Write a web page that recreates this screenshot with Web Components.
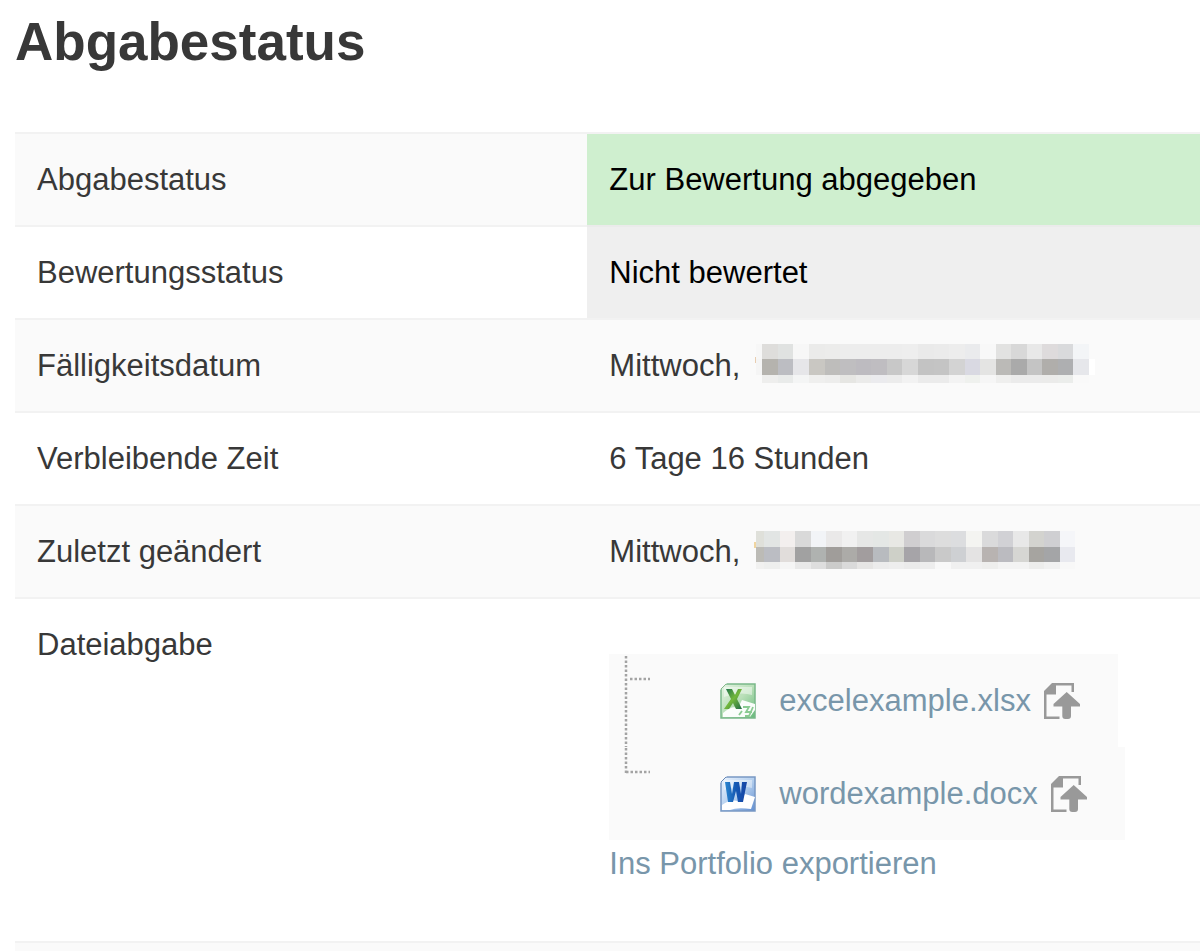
<!DOCTYPE html>
<html lang="de">
<head>
<meta charset="utf-8">
<title>Abgabestatus</title>
<style>
  body { margin: 0; background: #fff; color: #383838; font: 31px/43px "Liberation Sans", Arial, sans-serif; }
</style>
</head>
<body>
<submission-status></submission-status>

<template id="status-template">
  <style>
    :host { display: block; padding: 16px 0 0 15px; }
    h1 { margin: 0 0 64px; font-size: 53px; line-height: 52px; font-weight: 700; }
    table { width: 100%; border-collapse: separate; border-spacing: 0; table-layout: fixed; }
    .label-column { width: 48.3%; }
    th, td { box-sizing: border-box; padding: 24px 22px; border-top: 2px solid #f2f2f2; text-align: left; vertical-align: top; font-weight: 400; }
    tr:nth-child(odd) > * { background: #fafafa; }
    tr > .submitted, tr > .ungraded { background-clip: padding-box; color: #000; }
    tr > .submitted { background-color: #cfefcf; }
    tr > .ungraded { background-color: #efefef; border-top-color: #ebebeb; }
    .files { padding: 24px 22px 56px; }
    .export { display: block; margin-top: 2px; color: #7896aa; text-decoration: none; }
    file-tree { margin-top: 31px; }
    .next > td { padding: 4px 22px; }
  </style>
  <h1>Abgabestatus</h1>
  <table>
    <colgroup><col class="label-column"><col></colgroup>
    <tbody>
      <tr><th scope="row">Abgabestatus</th><td class="submitted">Zur Bewertung abgegeben</td></tr>
      <tr><th scope="row">Bewertungsstatus</th><td class="ungraded">Nicht bewertet</td></tr>
      <tr><th scope="row">Fälligkeitsdatum</th><td><masked-date kind="due">Mittwoch,</masked-date></td></tr>
      <tr><th scope="row">Verbleibende Zeit</th><td>6 Tage 16 Stunden</td></tr>
      <tr><th scope="row">Zuletzt geändert</th><td><masked-date kind="modified">Mittwoch,</masked-date></td></tr>
      <tr><th scope="row">Dateiabgabe</th>
        <td class="files">
          <file-tree>
            <file-entry kind="excel">excelexample.xlsx</file-entry>
            <file-entry kind="word">wordexample.docx</file-entry>
          </file-tree>
          <a class="export" href="#portfolio">Ins Portfolio exportieren</a>
        </td></tr>
      <tr class="next"><td colspan="2"></td></tr>
    </tbody>
  </table>
</template>

<template id="date-template">
  <style>
    :host { display: flex; align-items: flex-start; gap: 14px; height: 43px; }
    svg { display: block; flex: none; }
  </style>
  <span><slot></slot></span>
  <svg width="342" height="40" viewBox="0 0 342 40" shape-rendering="crispEdges" aria-hidden="true"></svg>
</template>

<template id="tree-template">
  <style>
    :host { display: flex; flex-direction: column; align-items: flex-start; }
  </style>
  <slot></slot>
</template>

<template id="file-template">
  <style>
    :host { display: flex; align-items: center; height: 93px; padding-right: 38px; background: #fafafa; }
    svg { display: block; flex: none; }
    .branch { margin-right: 70px; }
    .type { margin-right: 23px; }
    a { color: #7896aa; text-decoration: none; }
    .send { margin-left: 13px; }
  </style>
  <svg class="branch" width="41" height="93" viewBox="0 0 41 93" fill="none" stroke="#a3a3a3" stroke-width="2.5" stroke-dasharray="2.5 2" aria-hidden="true"><path></path></svg>
  <svg class="type" width="36" height="36" viewBox="0 0 36 36" aria-hidden="true"></svg>
  <a href="#file"><slot></slot></a>
  <a class="send" href="#send" aria-label="Exportieren">
    <svg width="36" height="36" viewBox="0 0 36 36" aria-hidden="true">
      <path d="M8 0H30V9H27.500V2.500H12V11.500H2.500V33.500H15.500V36H0V8Z" fill="#999"/>
      <path d="M22.700 9 36 21V23.500H27V33Q27 36 24 36H21.300Q18.300 36 18.300 33V23.500H9.500V21Z" fill="#999"/>
    </svg>
  </a>
</template>

<script>
  const stamp = (host, id) => {
    const root = host.attachShadow({ mode: 'open' });
    root.append(document.getElementById(id).content.cloneNode(true));
    return root;
  };

  /* Mosaic tones, listed by row from left to right. */
  const mosaics = {
    due: {
      edges: [2, 8, 24, 39, 55, 71, 86, 102, 117, 133, 148, 164, 180, 195, 211, 226, 242, 257, 273, 288, 304, 319, 335, 341],
      rows: [0, 15, 31, 39],
      tones: [
        'f7f7f7 dedddb e0e2e1 f7f7f7 ebebea ececeb ededed ededed ededed ededed eeeeee eaeaea ebebeb ededed eaebed f8f8f8 e2e2e1 d8d8d8 e8e8e8 dedbdc d9dadc f3f5f7',
        'f5f5f5 b5b3ae bcbdc2 e6e6e9 c9c7c2 bebdbb bfbec0 bdbbc0 bfbdc1 c8c8c8 d7d7d7 c3c3c3 c4c4c4 d3d3d3 d9d9e2 e4e4e3 bbbab7 aaaaaa c4c4c4 b0aeab aeafb1 e6e7eb ffffff',
        'fafafa eeeeed e9ebea f4f5f5 efefee ededec e6e6e3 ebebea ebebee ececec f2f2f2 ebebeb ebebeb f3f3f3 eff1ee f6f6f6 efefee ebebeb ebebeb ebebea ebedeb f9f9f9'
      ],
      mark: [1, 13, 'e8cdb0']
    },
    modified: {
      edges: [2, 10, 26, 41, 57, 72, 88, 103, 119, 135, 150, 166, 181, 197, 212, 228, 244, 259, 275, 290, 306, 321],
      rows: [1, 17, 32, 39],
      tones: [
        'dfe0da e2e5e4 f3efee d9d9d9 f2f4f7 eae9e9 f1f1f1 e6e7e6 e4e7e5 e8e8e4 d0ced0 dadadb dddddd dcdddf f4f4f1 dadadb d1d1d5 e8e8e8 d3d3cf cfcfd2 f5f6f9',
        'bcbbb6 bbbdc3 e1dddb a1a1a1 afb2b0 a09d9a acaba8 a29d9e b8bbbf ced0c8 a6a4a8 b8b8ba c9c9c9 ced0d3 e4e3e3 b8b3b1 bbbbc0 d6d6d3 a6a4a0 a4a5a7 e8e9ef',
        'f1f1f0 eeefee f5f5f5 e9e9e9 dedede cbcbca dadada e6e5e4 ececec eeeeee ebebeb ededed f8f8f8 f0f0f0 f0f0f0 eeeeed f3f3f3 f3f3f3 ededec f1f1f1 f8f8f8'
      ],
      mark: [0, 12, 'f0d5a0']
    }
  };

  customElements.define('masked-date', class extends HTMLElement {
    connectedCallback() {
      if (this.shadowRoot) return;
      const m = mosaics[this.getAttribute('kind')];
      let out = `<rect x="${m.mark[0]}" y="${m.mark[1]}" width="2" height="6" fill="#${m.mark[2]}"/>`;
      m.tones.forEach((line, r) => line.split(' ').forEach((tone, c) => {
        out += `<rect x="${m.edges[c]}" y="${m.rows[r]}" width="${m.edges[c + 1] - m.edges[c]}" height="${m.rows[r + 1] - m.rows[r]}" fill="#${tone}"/>`;
      }));
      stamp(this, 'date-template').querySelector('svg').innerHTML = out;
    }
  });

  const branches = {
    excel: 'M17 2V93M21 25H41',
    word: 'M17 1V26M17 25H41'
  };
  const icons = {
    excel: `
      <defs><linearGradient id="g" x2="1" y2="1"><stop stop-color="#e5f4e4"/><stop offset=".5" stop-color="#b9dfb8"/><stop offset="1" stop-color="#65b979"/></linearGradient>
      <linearGradient id="x" x2="1" y2="1"><stop stop-color="#176b4d"/><stop offset=".5" stop-color="#73b83c"/><stop offset="1" stop-color="#236b48"/></linearGradient></defs>
      <path d="M5 1H35V35H1V5Z" fill="url(#g)" stroke="#79b889" stroke-width="1.500"/>
      <path d="M4 4H32V12Q20 8 4 14Z" fill="#fff" opacity=".45"/>
      <path d="M3 34V30Q12 22 18 25L22 17 35 21V27L30 34Z" fill="#fff" opacity=".95"/>
      <path d="M6 6H12L15 12 18 6H22L17 16 22 26H16L13 20 9 26H4L11 16Z" fill="url(#x)"/>
      <path d="M23 24H29L26 29H32M25 33H29L33 24M19 32 22 28" fill="none" stroke="#8acb92" stroke-width="1.800"/>
      <path d="M0 0H7L0 7Z" fill="#fafafa"/><path d="M1 6 6 1" stroke="#86b98c"/>`,
    word: `
      <defs><linearGradient id="b" x2="1" y2="1"><stop stop-color="#edf5ff"/><stop offset=".5" stop-color="#b5d0ef"/><stop offset="1" stop-color="#618ed1"/></linearGradient>
      <linearGradient id="w" x2="1"><stop stop-color="#2b86cf"/><stop offset=".5" stop-color="#1558b3"/><stop offset="1" stop-color="#1745a5"/></linearGradient></defs>
      <path d="M5 1H35V35H1V5Z" fill="url(#b)" stroke="#7898c4" stroke-width="1.500"/>
      <path d="M4 4H32V12Q20 8 4 14Z" fill="#fff" opacity=".4"/>
      <path d="M2 34V29Q12 22 19 26L25 18 35 21 31 33Q17 31 10 34Z" fill="#fff"/>
      <path d="M5 6H10L12 18 14 6H19L21 18 22 6H27L23 26H18L16 15 13 26H8Z" fill="url(#w)"/>
      <path d="M0 0H7L0 7Z" fill="#fafafa"/><path d="M1 6 6 1" stroke="#6787b5"/>`
  };
  customElements.define('file-entry', class extends HTMLElement {
    connectedCallback() {
      if (this.shadowRoot) return;
      const kind = this.getAttribute('kind');
      const root = stamp(this, 'file-template');
      root.querySelector('.branch path').setAttribute('d', branches[kind]);
      root.querySelector('.type').innerHTML = icons[kind];
    }
  });

  customElements.define('file-tree', class extends HTMLElement {
    connectedCallback() { if (!this.shadowRoot) stamp(this, 'tree-template'); }
  });
  customElements.define('submission-status', class extends HTMLElement {
    connectedCallback() { if (!this.shadowRoot) stamp(this, 'status-template'); }
  });
</script>
</body>
</html>
